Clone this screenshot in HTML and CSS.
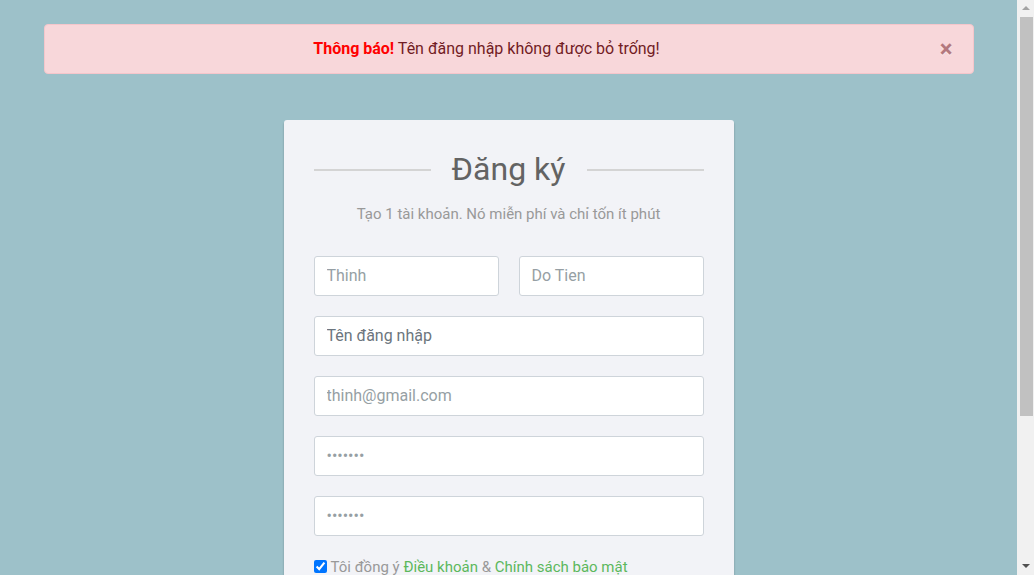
FILE: index.html
```html
<!DOCTYPE html>
<html lang="vi">
<head>
<meta charset="utf-8">
<title>Đăng ký</title>
<link rel="stylesheet" href="styles.css">
</head>
<body>
<div class="container">
  <div class="alert">
    <strong class="alert-title">Thông báo!</strong> Tên đăng nhập không được bỏ trống!
    <button type="button" class="close">&times;</button>
  </div>
</div>
<div class="signup-form">
  <form class="card">
    <h2 class="title">Đăng ký</h2>
    <p class="hint-text">Tạo 1 tài khoản. Nó miễn phí và chỉ tốn ít phút</p>
    <div class="form-group row">
      <input type="text" class="form-control" value="Thinh">
      <input type="text" class="form-control" value="Do Tien">
    </div>
    <div class="form-group">
      <input type="text" class="form-control" placeholder="Tên đăng nhập">
    </div>
    <div class="form-group">
      <input type="email" class="form-control" value="thinh@gmail.com">
    </div>
    <div class="form-group">
      <input type="password" class="form-control" value="1234567">
    </div>
    <div class="form-group">
      <input type="password" class="form-control" value="1234567">
    </div>
    <div class="form-group">
      <label class="check-label"><input type="checkbox" class="check" checked>Tôi đồng ý <a href="#" class="link">Điều khoản</a> &amp; <a href="#" class="link">Chính sách bảo mật</a></label>
    </div>
    <div class="form-group">
      <button type="button" class="btn">Đăng ký ngay</button>
    </div>
  </form>
  <div class="footer-text">Đã có tài khoản? <a href="#" class="footer-link">Đăng nhập</a></div>
</div>
<div class="scrollbar" aria-hidden="true">
  <span class="arrow-up"></span>
  <span class="thumb"></span>
  <span class="arrow-down"></span>
</div>
</body>
</html>
```

FILE: styles.css
```css
* { box-sizing: border-box; }
html, body { margin: 0; }
body {
  background: #9dc1c9;
  font-family: Roboto, "Liberation Sans", sans-serif;
  font-size: 16px;
  line-height: 1.5;
  color: #fff;
  margin-right: 17px;
}
.container {
  max-width: 960px;
  margin: 0 auto;
  padding: 24px 15px 0;
}
.alert {
  position: relative;
  background: #f8d7da;
  border: 1px solid #f5c6cb;
  color: #721c24;
  border-radius: 4px;
  padding: 12px 64px 12px 20px;
  text-align: center;
  margin-bottom: 16px;
}
.alert-title { color: #ff0000; font-weight: 700; }
.close {
  position: absolute;
  top: 0;
  right: 0;
  padding: 12px 20px;
  background: transparent;
  border: 0;
  font-family: inherit;
  font-size: 24px;
  font-weight: 700;
  line-height: 1;
  color: inherit;
  opacity: 0.5;
  text-shadow: 0 1px 0 #fff;
  cursor: pointer;
}
.signup-form {
  width: 450px;
  margin: 0 auto;
  padding: 30px 0;
  font-size: 15px;
}
.card {
  color: #999;
  border-radius: 3px;
  margin: 0 0 15px;
  background: #f2f3f7;
  box-shadow: 0 2px 2px rgba(0, 0, 0, 0.3);
  padding: 30px;
}
.title {
  color: #636363;
  margin: 0 0 15px;
  position: relative;
  text-align: center;
  font-size: 32px;
  font-weight: 400;
  line-height: 1.2;
}
.title::before, .title::after {
  content: "";
  height: 2px;
  width: 30%;
  background: #d4d4d4;
  position: absolute;
  top: 50%;
}
.title::before { left: 0; }
.title::after { right: 0; }
.hint-text {
  color: #999;
  margin: 0 0 30px;
  text-align: center;
}
.form-group { margin-bottom: 20px; }
.row {
  display: grid;
  grid-template-columns: 1fr 1fr;
  gap: 20px;
}
.form-control {
  display: block;
  width: 100%;
  height: 40px;
  padding: 6px 12px;
  font-family: inherit;
  font-size: 16px;
  line-height: 1.5;
  color: #969fa4;
  background: #fff;
  border: 1px solid #ced4da;
  border-radius: 3px;
  box-shadow: none;
  outline: none;
}
.form-control::placeholder { color: #6c757d; opacity: 1; }
.check-label { display: inline; }
.check {
  width: 13px;
  height: 13px;
  margin: 0 4px 0 0;
  vertical-align: -1px;
}
.link { color: #5cb85c; text-decoration: none; }
.btn {
  display: block;
  width: 100%;
  padding: 8px 16px;
  font-family: inherit;
  font-size: 16px;
  font-weight: 700;
  color: #fff;
  background: #28a745;
  border: 1px solid #28a745;
  border-radius: 3px;
}
.footer-text { text-align: center; }
.footer-link { color: #fff; text-decoration: underline; }

.scrollbar {
  position: fixed;
  top: 0;
  right: 0;
  width: 17px;
  height: 100vh;
  background: #f1f1f1;
  display: flex;
  flex-direction: column;
  align-items: center;
}
.arrow-up {
  width: 0;
  height: 0;
  margin-top: 6px;
  border-left: 4px solid transparent;
  border-right: 4px solid transparent;
  border-bottom: 4px solid #a3a3a3;
}
.thumb {
  width: 13px;
  height: 399px;
  margin-top: 7px;
  margin-left: 1px;
  background: #c1c1c1;
}
.arrow-down {
  width: 0;
  height: 0;
  margin-top: auto;
  margin-bottom: 7px;
  border-left: 4px solid transparent;
  border-right: 4px solid transparent;
  border-top: 4px solid #505050;
}
```
